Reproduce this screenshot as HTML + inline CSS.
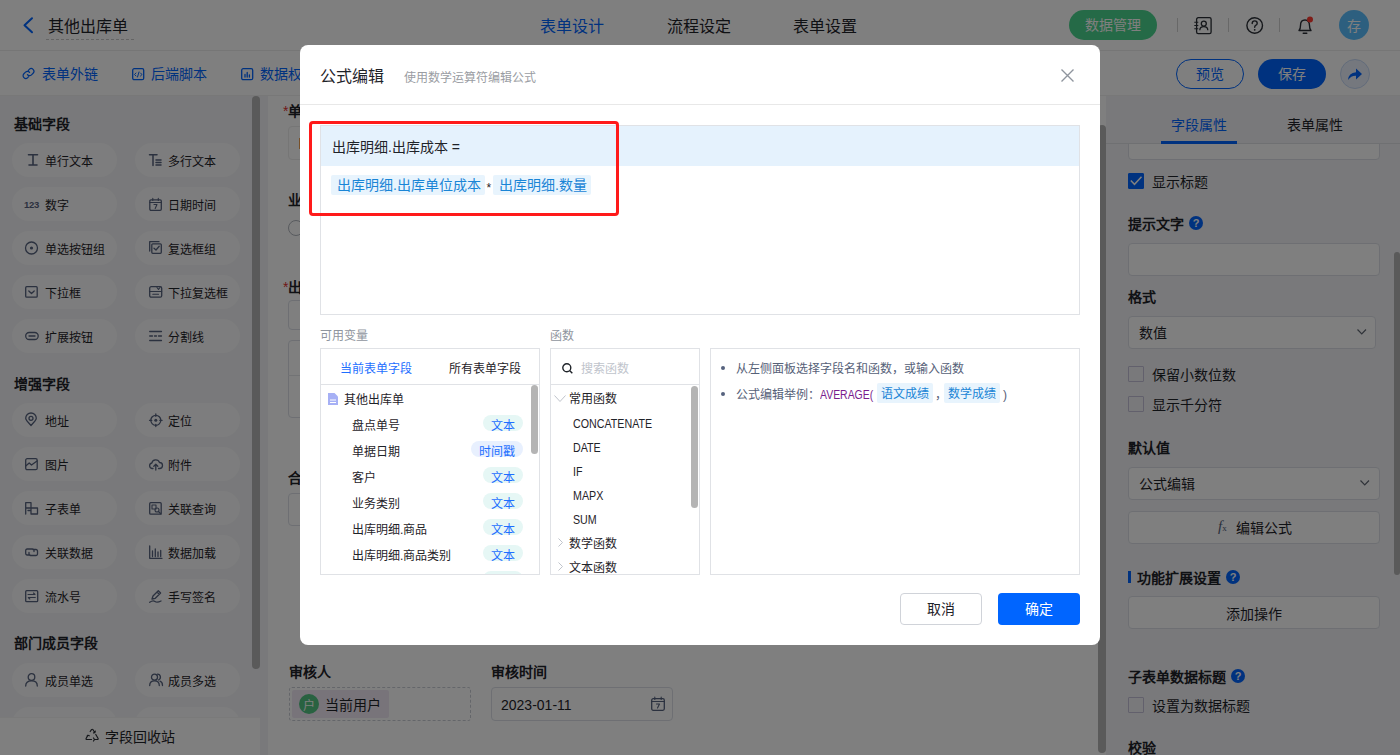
<!DOCTYPE html>
<html lang="zh-CN">
<head>
<meta charset="utf-8">
<style>
*{box-sizing:border-box;margin:0;padding:0}
html,body{width:1400px;height:755px;overflow:hidden}
body{position:relative;font-family:"Liberation Sans",sans-serif;background:#fff;color:#1f2329}
.a{position:absolute}
.t{position:absolute;white-space:nowrap;line-height:20px}
.f12{font-size:12px;margin-top:2px}
.f14{font-size:14px;margin-top:1px}
.f16{font-size:16px;margin-top:2px}
.b{font-weight:bold}
svg{position:absolute;overflow:visible}
.pill{position:absolute;width:105px;height:34px;border-radius:17px;background:#fbfbfc}
.pill .t{left:33px;top:9px;font-size:12px;color:#1f2329}
.pill svg{left:15px;top:11px}
.ico{fill:none;stroke:#56627e;stroke-width:1.3;stroke-linecap:round;stroke-linejoin:round}
.inp{position:absolute;border:1px solid #dcdfe6;border-radius:4px;background:#fff}
.cb{position:absolute;width:16px;height:16px;border:1px solid #c4c0d8;border-radius:1px}
.q{position:absolute;width:14px;height:14px;border-radius:7px;background:#0064ff;color:#fff;font-size:11px;font-weight:bold;line-height:14px;text-align:center}
</style>
</head>
<body>
<!-- ===== HEADER ===== -->
<div class="a" style="left:0;top:0;width:1400px;height:96px;background:#fff"></div>
<div class="a" style="left:0;top:50px;width:1400px;height:1px;background:#ececec"></div>
<svg style="left:22px;top:17px" width="12" height="17"><path d="M10 1.2 L2.5 8.2 L10 15.2" fill="none" stroke="#0064ff" stroke-width="2" stroke-linecap="round" stroke-linejoin="round"/></svg>
<div class="t f16" style="left:48px;top:15px">其他出库单</div>
<div class="a" style="left:46px;top:39px;width:88px;height:0;border-top:1px dashed #c8c8c8"></div>
<div class="t f16" style="left:540px;top:15px;color:#0064ff">表单设计</div>
<div class="t f16" style="left:667px;top:15px">流程设定</div>
<div class="t f16" style="left:793px;top:15px">表单设置</div>

<div class="a" style="left:1069px;top:10px;width:88px;height:30px;border-radius:15px;background:#4ad48e"></div>
<div class="t f14" style="left:1085px;top:14px;color:#fff">数据管理</div>
<div class="a" style="left:1177px;top:18px;width:1px;height:14px;background:#d0d0d0"></div>
<div class="a" style="left:1228px;top:18px;width:1px;height:14px;background:#d0d0d0"></div>
<div class="a" style="left:1279px;top:18px;width:1px;height:14px;background:#d0d0d0"></div>
<!-- contacts icon -->
<svg style="left:1194px;top:17px" width="18" height="17"><rect x="2.6" y="0.7" width="14.5" height="16" rx="1.6" fill="none" stroke="#2b2f36" stroke-width="1.3"/><circle cx="9.8" cy="6.6" r="2.5" fill="none" stroke="#2b2f36" stroke-width="1.3"/><path d="M5.8 13.2 Q5.8 9.6 9.8 9.6 Q13.8 9.6 13.8 13.2" fill="none" stroke="#2b2f36" stroke-width="1.3"/><path d="M0.3 5.2H4.3M0.3 8.5H4.3M0.3 11.8H4.3" stroke="#2b2f36" stroke-width="1.1"/></svg>
<!-- help -->
<svg style="left:1246px;top:17px" width="18" height="18"><circle cx="8.7" cy="8.5" r="7.8" fill="none" stroke="#2b2f36" stroke-width="1.4"/><path d="M6.2 6.6 Q6.2 3.9 8.7 3.9 Q11.2 3.9 11.2 6.2 Q11.2 7.7 9.6 8.4 Q8.7 8.9 8.7 10.3" fill="none" stroke="#2b2f36" stroke-width="1.4" stroke-linecap="round"/><circle cx="8.7" cy="12.8" r="0.9" fill="#2b2f36"/></svg>
<!-- bell -->
<svg style="left:1297px;top:17px" width="17" height="18"><path d="M2 13.5 Q3.5 12 3.5 8.5 Q3.5 3 8 3 Q12.5 3 12.5 8.5 Q12.5 12 14 13.5 Z" fill="none" stroke="#2b2f36" stroke-width="1.4" stroke-linejoin="round"/><path d="M6.2 16.3H9.8" stroke="#2b2f36" stroke-width="1.4" stroke-linecap="round"/><circle cx="13" cy="2.5" r="3" fill="#ff3b30"/></svg>
<div class="a" style="left:1339px;top:10px;width:30px;height:30px;border-radius:15px;background:#5abfff"></div>
<div class="t f14" style="left:1347px;top:15px;color:#fff">存</div>

<!-- toolbar -->
<div class="a" style="left:0;top:95px;width:1400px;height:1px;background:#f0f0f0"></div>
<svg style="left:22px;top:67px" width="13" height="13" viewBox="0 0 24 24"><path d="M10 14a5 5 0 0 0 7.5.5l3-3a5 5 0 0 0-7.1-7.1l-1.7 1.7M14 10a5 5 0 0 0-7.5-.5l-3 3a5 5 0 0 0 7.1 7.1l1.7-1.7" fill="none" stroke="#0064ff" stroke-width="2.2" stroke-linecap="round"/></svg>
<div class="t f14" style="left:42px;top:63px;color:#0064ff">表单外链</div>
<svg style="left:132px;top:68px" width="13" height="13"><rect x="0.7" y="0.7" width="11" height="11" rx="1.5" class="ico" style="stroke:#0064ff"/><path d="M4 5 L2.5 6.5 L4 8 M8.5 5 L10 6.5 L8.5 8 M7 4 L5.5 9" class="ico" style="stroke:#0064ff;stroke-width:1"/></svg>
<div class="t f14" style="left:151px;top:63px;color:#0064ff">后端脚本</div>
<svg style="left:241px;top:68px" width="13" height="13"><rect x="0.7" y="0.7" width="11" height="11" rx="1.5" class="ico" style="stroke:#0064ff"/><path d="M4 9V6.5M6.2 9V4.5M8.4 9V7" class="ico" style="stroke:#0064ff"/></svg>
<div class="t f14" style="left:260px;top:63px;color:#0064ff">数据权限</div>

<div class="a" style="left:1176px;top:59px;width:68px;height:30px;border-radius:15px;border:1px solid #0064ff;background:#fff"></div>
<div class="t f14" style="left:1196px;top:63px;color:#0064ff">预览</div>
<div class="a" style="left:1258px;top:59px;width:68px;height:30px;border-radius:15px;background:#0064ff"></div>
<div class="t f14" style="left:1278px;top:63px;color:#fff">保存</div>
<div class="a" style="left:1340px;top:59px;width:30px;height:30px;border-radius:15px;border:1px solid #c6d8f5;background:#eaf1fd"></div>
<svg style="left:1347px;top:67px" width="16" height="14"><path d="M1 13 Q1.5 6 9 5.3 V1.5 L15 7 L9 12.5 V8.7 Q4 8.5 1 13 Z" fill="#0064ff"/></svg>

<!-- ===== SIDEBAR ===== -->
<div class="a" style="left:0;top:96px;width:268px;height:659px;background:#f2f3f6"></div>
<div class="a" style="left:252px;top:96px;width:8px;height:573px;border-radius:4px;background:#b4b4b4"></div>
<div class="t f14 b" style="left:14px;top:113px">基础字段</div>
<div class="pill" style="left:12px;top:143px"><svg style="left:16px;top:11px" width="14" height="14"><path d="M0.5 0.8H9.5M1 11H9M5 0.8V11" class="ico" style="stroke-width:1.6"/></svg><div class="t">单行文本</div></div>
<div class="pill" style="left:135px;top:143px"><svg style="left:14px;top:11px" width="14" height="14"><path d="M0.5 0.7H8M4 0.7V11.5M7 6H12M7 8.5H12M7 11H12" class="ico" style="stroke-width:1.5"/></svg><div class="t">多行文本</div></div>
<div class="pill" style="left:12px;top:187px"><svg style="left:12px;top:11px" width="14" height="14"><text x="0" y="9.5" font-size="9.5" font-weight="bold" fill="#56627e" font-family="Liberation Sans" style="letter-spacing:-0.3px">123</text></svg><div class="t">数字</div></div>
<div class="pill" style="left:135px;top:187px"><svg style="left:14px;top:11px" width="14" height="14"><rect x="0.8" y="1.8" width="11.5" height="10.5" rx="1.2" class="ico"/><path d="M0.8 4.5H12.3M3.8 0.3V2.5M9.3 0.3V2.5M5 6.5H8L6.2 10.5" class="ico" style="stroke-width:1.1"/></svg><div class="t">日期时间</div></div>
<div class="pill" style="left:12px;top:231px"><svg style="left:13px;top:11px" width="14" height="14"><circle cx="6.5" cy="6" r="6" class="ico"/><circle cx="6.5" cy="6" r="1.6" fill="#56627e"/></svg><div class="t">单选按钮组</div></div>
<div class="pill" style="left:135px;top:231px"><svg style="left:14px;top:10px" width="14" height="14"><path d="M0.7 10V0.7H10" class="ico"/><rect x="2.8" y="2.8" width="9.5" height="9.5" rx="1" class="ico"/><path d="M5 7.2L7 9L10.2 5.3" class="ico"/></svg><div class="t">复选框组</div></div>
<div class="pill" style="left:12px;top:275px"><svg style="left:13px;top:11px" width="14" height="14"><rect x="0.7" y="0.7" width="11.5" height="10.5" rx="1" class="ico"/><path d="M3.8 5L6.5 7.5L9.2 5" class="ico"/></svg><div class="t">下拉框</div></div>
<div class="pill" style="left:135px;top:275px"><svg style="left:14px;top:11px" width="14" height="14"><rect x="0.7" y="0.7" width="12" height="10.5" rx="1.5" class="ico"/><path d="M0.7 5.5H12.7M3.8 8.2H9.5M8 1.5L9.5 3.5L11 1.5" class="ico" style="stroke-width:1.1"/></svg><div class="t">下拉复选框</div></div>
<div class="pill" style="left:12px;top:319px"><svg style="left:13px;top:11px" width="14" height="14"><rect x="0.7" y="2.5" width="12.5" height="7" rx="3.5" class="ico"/><path d="M4 6H10" class="ico"/></svg><div class="t">扩展按钮</div></div>
<div class="pill" style="left:135px;top:319px"><svg style="left:14px;top:11px" width="14" height="14"><path d="M0.7 1.5H12.5M0.7 6H3.5M5.5 6H7.5M9.5 6H12.5M0.7 10.5H12.5" class="ico"/></svg><div class="t">分割线</div></div>
<div class="pill" style="left:12px;top:403px"><svg style="left:13px;top:10px" width="14" height="14"><path d="M6 12.5Q0.7 7 0.7 5.3A5.3 5.3 0 0 1 11.3 5.3Q11.3 7 6 12.5Z" class="ico"/><circle cx="6" cy="5.3" r="2" class="ico"/></svg><div class="t">地址</div></div>
<div class="pill" style="left:135px;top:403px"><svg style="left:14px;top:11px" width="14" height="14"><circle cx="6.8" cy="6.3" r="5" class="ico"/><circle cx="6.8" cy="6.3" r="1.5" fill="#56627e"/><path d="M6.8 0V2.3M6.8 10.3V12.6M0.5 6.3H2.8M10.8 6.3H13.1" class="ico"/></svg><div class="t">定位</div></div>
<div class="pill" style="left:12px;top:447px"><svg style="left:13px;top:11px" width="14" height="14"><rect x="0.7" y="0.7" width="11.5" height="11" rx="1.5" class="ico"/><path d="M0.7 8L4.2 5L6.5 7L12 3" class="ico"/></svg><div class="t">图片</div></div>
<div class="pill" style="left:135px;top:447px"><svg style="left:14px;top:11px" width="14" height="14"><path d="M4 10.5H3A2.8 2.8 0 0 1 2.8 5A4 4 0 0 1 10.5 4.5A2.9 2.9 0 0 1 10.5 10.5H9.5M6.8 12V6.5M4.8 8.3L6.8 6.3L8.8 8.3" class="ico"/></svg><div class="t">附件</div></div>
<div class="pill" style="left:12px;top:491px"><svg style="left:13px;top:11px" width="14" height="14"><path d="M0.7 12V0.7H6V12H12.5V6H0.7M6 8.5H3" class="ico"/></svg><div class="t">子表单</div></div>
<div class="pill" style="left:135px;top:491px"><svg style="left:14px;top:11px" width="14" height="14"><rect x="0.7" y="0.7" width="11.5" height="11.5" rx="1" class="ico"/><rect x="3" y="3" width="4" height="4" class="ico" style="stroke-width:1.1"/><circle cx="8" cy="8" r="2" class="ico" style="stroke-width:1.1"/><path d="M9.5 9.5L12 12" class="ico"/></svg><div class="t">关联查询</div></div>
<div class="pill" style="left:12px;top:535px"><svg style="left:13px;top:11px" width="14" height="14"><path d="M5 9H2A1.5 1.5 0 0 1 0.7 7.5V4.5A1.5 1.5 0 0 1 2 3H7.5A1.5 1.5 0 0 1 9 4.5V5.5M8 3.5H11A1.5 1.5 0 0 1 12.5 5V8A1.5 1.5 0 0 1 11 9.5H5.5A1.5 1.5 0 0 1 4 8V6.5" class="ico"/></svg><div class="t">关联数据</div></div>
<div class="pill" style="left:135px;top:535px"><svg style="left:14px;top:11px" width="14" height="14"><path d="M0.7 0V12.3H13M3.5 10.5V5M6.3 10.5V3M9 10.5V6M11.7 10.5V4.5" class="ico"/></svg><div class="t">数据加载</div></div>
<div class="pill" style="left:12px;top:579px"><svg style="left:13px;top:11px" width="14" height="14"><rect x="0.7" y="0.7" width="12" height="11" rx="1" class="ico"/><path d="M3 4.5H10L8.5 3M10.3 7.5H3.3L4.8 9" class="ico" style="stroke-width:1.1"/></svg><div class="t">流水号</div></div>
<div class="pill" style="left:135px;top:579px"><svg style="left:14px;top:11px" width="14" height="14"><path d="M3 9L4 6L9.3 0.7L11.6 3L6.3 8.3L3 9ZM8 2L10.3 4.3M0.7 12.3Q4 10 6 11.5Q8 13 12 11" class="ico"/></svg><div class="t">手写签名</div></div>
<div class="pill" style="left:12px;top:663px"><svg style="left:13px;top:10px" width="14" height="14"><circle cx="6.5" cy="4" r="3.3" class="ico"/><path d="M0.7 13Q0.7 7.8 6.5 7.8Q12.3 7.8 12.3 13" class="ico"/></svg><div class="t">成员单选</div></div>
<div class="pill" style="left:135px;top:663px"><svg style="left:14px;top:10px" width="14" height="14"><circle cx="5.5" cy="4.2" r="3" class="ico"/><path d="M0.7 12.5Q0.7 7.8 5.5 7.8Q10.3 7.8 10.3 12.5M8.5 1.2A3 3 0 0 1 9.5 7M11 8.2Q13.5 9 13.5 12.5" class="ico"/></svg><div class="t">成员多选</div></div>
<div class="pill" style="left:12px;top:707px"><svg style="left:13px;top:11px" width="14" height="14"></svg><div class="t">部门单选</div></div>
<div class="pill" style="left:135px;top:707px"><svg style="left:14px;top:11px" width="14" height="14"></svg><div class="t">部门多选</div></div>

<div class="t f14 b" style="left:14px;top:373px">增强字段</div>
<div class="t f14 b" style="left:14px;top:632px">部门成员字段</div>
<div class="a" style="left:0;top:717px;width:260px;height:38px;background:#fff;border-top:1px solid #f4f4f4"></div>
<svg style="left:85px;top:729px" width="15" height="14"><path d="M5.2 2.5L6.5 0.7Q7.3 -0.2 8 0.7L9.8 3.5M10.8 5.5L13 9.3Q13.5 10.5 12.3 10.5H9.5M6.5 10.5H1.8Q0.7 10.5 1.2 9.3L3 6.3M8.5 3.8L9.9 3.6L10.3 2.2M8.5 9L9.5 10.5L8.5 12M4.3 6.8L3 6.2L2 7.2" class="ico" style="stroke:#2b2f36;stroke-width:1.2"/></svg>
<div class="t f14" style="left:105px;top:726px">字段回收站</div>

<!-- ===== CANVAS ===== -->
<div class="a" style="left:268px;top:96px;width:838px;height:659px;background:#fff"></div>
<div class="a" style="left:1098px;top:125px;width:8px;height:628px;border-radius:4px;background:#b4b4b4"></div>
<div class="t f14 b" style="left:283px;top:100px"><span style="color:#e03030;font-weight:normal">*</span>单据编号</div>
<div class="inp" style="left:288px;top:126px;width:300px;height:34px;border-color:#ececec"></div><div class="a" style="left:299px;top:138px;width:1px;height:11px;background:#f0a050"></div>
<div class="t f14 b" style="left:288px;top:189px">业务类别</div>
<div class="a" style="left:288px;top:220px;width:16px;height:16px;border-radius:8px;border:1px solid #b0b5bd;background:#fff"></div>
<div class="t f14 b" style="left:283px;top:276px"><span style="color:#e03030;font-weight:normal">*</span>出库明细</div>
<div class="inp" style="left:288px;top:300px;width:300px;height:30px"></div>
<div class="inp" style="left:288px;top:340px;width:300px;height:78px"></div>
<div class="a" style="left:288px;top:375px;width:300px;height:1px;background:#e5e6eb"></div>
<div class="t f14 b" style="left:288px;top:467px">合计</div>
<div class="inp" style="left:288px;top:493px;width:300px;height:33px"></div>

<div class="t f14 b" style="left:289px;top:661px">审核人</div>
<div class="a" style="left:289px;top:687px;width:182px;height:34px;border:1px dashed #c9cdd4;border-radius:3px"></div>
<div class="a" style="left:292px;top:690px;width:97px;height:28px;border-radius:2px;background:#f0e9f5"></div>
<div class="a" style="left:299px;top:694px;width:20px;height:20px;border-radius:10px;background:#52c483"></div>
<div class="t f12" style="left:303px;top:694px;color:#fff">户</div>
<div class="t f14" style="left:325px;top:694px">当前用户</div>
<div class="t f14 b" style="left:491px;top:661px">审核时间</div>
<div class="inp" style="left:491px;top:687px;width:182px;height:34px"></div>
<div class="t f14" style="left:501px;top:694px">2023-01-11</div>
<svg style="left:651px;top:697px" width="14" height="14"><rect x="0.7" y="1.7" width="12.6" height="11.6" rx="1.5" class="ico"/><path d="M0.7 4.5H13.3M3.8 0V2.5M10.2 0V2.5M5.5 7H8.5L6.5 11" class="ico" style="stroke-width:1.1"/></svg>

<!-- ===== RIGHT PANEL ===== -->
<div class="a" style="left:1106px;top:96px;width:294px;height:659px;background:#f2f3f6"></div>
<div class="inp" style="left:1128px;top:127px;width:252px;height:33px"></div>
<div class="a" style="left:1106px;top:96px;width:294px;height:48px;background:#f2f3f6;border-bottom:1px solid #dfe1e5"></div>
<div class="t f14" style="left:1171px;top:114px;color:#0064ff">字段属性</div>
<div class="a" style="left:1161px;top:141px;width:76px;height:3px;background:#0064ff"></div>
<div class="t f14" style="left:1287px;top:114px">表单属性</div>
<div class="a" style="left:1394px;top:252px;width:6px;height:323px;border-radius:3px;background:#b4b4b4"></div>

<div class="cb" style="left:1128px;top:173px;background:#0064ff;border-color:#0064ff"></div>
<svg style="left:1130px;top:176px" width="12" height="10"><path d="M0.8 4.5L4.5 8.3L11.5 0.8" fill="none" stroke="#fff" stroke-width="1.5"/></svg>
<div class="t f14" style="left:1152px;top:171px">显示标题</div>
<div class="t f14 b" style="left:1128px;top:213px">提示文字</div>
<div class="q" style="left:1189px;top:216px">?</div>
<div class="inp" style="left:1128px;top:243px;width:252px;height:33px"></div>
<div class="t f14 b" style="left:1128px;top:286px">格式</div>
<div class="inp" style="left:1128px;top:316px;width:248px;height:33px"></div>
<div class="t f14" style="left:1139px;top:322px">数值</div>
<svg style="left:1357px;top:329px" width="10" height="6"><path d="M0.5 0.5L4.75 5L9 0.5" fill="none" stroke="#5f6672" stroke-width="1.2"/></svg>
<div class="cb" style="left:1128px;top:366px"></div>
<div class="t f14" style="left:1152px;top:364px">保留小数位数</div>
<div class="cb" style="left:1128px;top:396px"></div>
<div class="t f14" style="left:1152px;top:394px">显示千分符</div>
<div class="t f14 b" style="left:1128px;top:437px">默认值</div>
<div class="inp" style="left:1128px;top:467px;width:252px;height:33px"></div>
<div class="t f14" style="left:1139px;top:473px">公式编辑</div>
<svg style="left:1360px;top:480px" width="10" height="6"><path d="M0.5 0.5L4.75 5L9 0.5" fill="none" stroke="#5f6672" stroke-width="1.2"/></svg>
<div class="inp" style="left:1128px;top:511px;width:252px;height:33px"></div>
<div class="t" style="left:1218px;top:516px;font-family:'Liberation Serif',serif;font-style:italic;font-size:15px;color:#566178">f<span style="font-size:9px;font-style:normal">x</span></div>
<div class="t f14" style="left:1236px;top:517px">编辑公式</div>
<div class="a" style="left:1128px;top:571px;width:3px;height:12px;background:#0064ff"></div>
<div class="t f14 b" style="left:1137px;top:567px">功能扩展设置</div>
<div class="q" style="left:1226px;top:570px">?</div>
<div class="inp" style="left:1128px;top:596px;width:252px;height:33px"></div>
<div class="t f14" style="left:1226px;top:603px">添加操作</div>
<div class="t f14 b" style="left:1128px;top:666px">子表单数据标题</div>
<div class="q" style="left:1231px;top:669px">?</div>
<div class="cb" style="left:1128px;top:697px"></div>
<div class="t f14" style="left:1152px;top:695px">设置为数据标题</div>
<div class="t f14 b" style="left:1128px;top:737px">校验</div>

<!-- ===== OVERLAY ===== -->
<div class="a" style="left:0;top:0;width:1400px;height:755px;background:rgba(0,0,0,.5)"></div>

<!-- ===== MODAL ===== -->
<div class="a" style="left:300px;top:45px;width:800px;height:600px;border-radius:8px;background:#fff"></div>
<div class="t f16" style="left:320px;top:65px;color:#1f2329">公式编辑</div>
<div class="t f12" style="left:404px;top:66px;color:#9a9da3">使用数学运算符编辑公式</div>
<svg style="left:1061px;top:69px" width="13" height="13"><path d="M0.5 0.5L12.5 12.5M12.5 0.5L0.5 12.5" stroke="#8f959e" stroke-width="1.4"/></svg>
<div class="a" style="left:300px;top:104px;width:800px;height:1px;background:#e8e8e8"></div>

<div class="a" style="left:320px;top:125px;width:760px;height:190px;border:1px solid #e0e2e6"></div>
<div class="a" style="left:321px;top:126px;width:758px;height:40px;background:#e5f2fd"></div>
<div class="t f14" style="left:332px;top:136px;color:#1f2329">出库明细.出库成本 =</div>
<div class="a" style="left:331px;top:175px;width:154px;height:20px;border-radius:2px;background:#e8f4fd"></div>
<div class="t f14" style="left:337px;top:174px;color:#1a85d6">出库明细.出库单位成本</div>
<div class="t f12" style="left:486.5px;top:176px;color:#1f2329">*</div>
<div class="a" style="left:493px;top:175px;width:98px;height:20px;border-radius:2px;background:#e8f4fd"></div>
<div class="t f14" style="left:499px;top:174px;color:#1a85d6">出库明细.数量</div>
<div class="a" style="left:309px;top:121px;width:310px;height:95px;border:3px solid #ff1a1a;border-radius:4px"></div>

<div class="t f12" style="left:320px;top:324px;color:#8f959e">可用变量</div>
<div class="t f12" style="left:550px;top:324px;color:#8f959e">函数</div>

<div class="a" style="left:320px;top:348px;width:220px;height:227px;border:1px solid #e0e2e6"></div>
<div class="a" style="left:321px;top:384px;width:218px;height:1px;background:#e0e2e6"></div>
<div class="t f12" style="left:340px;top:357px;color:#1e6fff">当前表单字段</div>
<div class="t f12" style="left:449px;top:357px;color:#1f2329">所有表单字段</div>
<svg style="left:328px;top:393px" width="10" height="12"><path d="M0 0H6.5L10 3.5V12H0Z" fill="#a6b0f5"/><path d="M2 7H8M2 9.5H8" stroke="#fff" stroke-width="1"/></svg>
<div class="t f12" style="left:344px;top:388px">其他出库单</div>
<div class="a" style="left:321px;top:385px;width:218px;height:189px;overflow:hidden">
<div class="t f12" style="left:31px;top:29px">盘点单号</div>
<div class="a" style="left:162px;top:30px;width:40px;height:16px;border-radius:8px;background:#e6f7f5"></div>
<div class="t f12" style="left:170px;top:29px;color:#1e6fff">文本</div>
<div class="t f12" style="left:31px;top:55px">单据日期</div>
<div class="a" style="left:150px;top:56px;width:52px;height:16px;border-radius:8px;background:#e8f0fe"></div>
<div class="t f12" style="left:158px;top:55px;color:#1e6fff">时间戳</div>
<div class="t f12" style="left:31px;top:81px">客户</div>
<div class="a" style="left:162px;top:82px;width:40px;height:16px;border-radius:8px;background:#e6f7f5"></div>
<div class="t f12" style="left:170px;top:81px;color:#1e6fff">文本</div>
<div class="t f12" style="left:31px;top:107px">业务类别</div>
<div class="a" style="left:162px;top:108px;width:40px;height:16px;border-radius:8px;background:#e6f7f5"></div>
<div class="t f12" style="left:170px;top:107px;color:#1e6fff">文本</div>
<div class="t f12" style="left:31px;top:133px">出库明细.商品</div>
<div class="a" style="left:162px;top:134px;width:40px;height:16px;border-radius:8px;background:#e6f7f5"></div>
<div class="t f12" style="left:170px;top:133px;color:#1e6fff">文本</div>
<div class="t f12" style="left:31px;top:159px">出库明细.商品类别</div>
<div class="a" style="left:162px;top:160px;width:40px;height:16px;border-radius:8px;background:#e6f7f5"></div>
<div class="t f12" style="left:170px;top:159px;color:#1e6fff">文本</div>
<div class="t f12" style="left:31px;top:185px">出库明细.数量</div>
<div class="a" style="left:162px;top:186px;width:40px;height:16px;border-radius:8px;background:#e6f7f5"></div>
<div class="t f12" style="left:170px;top:185px;color:#1e6fff">数字</div>
</div>
<div class="a" style="left:531px;top:385px;width:7px;height:69px;border-radius:3.5px;background:#b4b4b4"></div>

<div class="a" style="left:550px;top:348px;width:150px;height:227px;border:1px solid #e0e2e6"></div>
<div class="a" style="left:551px;top:384px;width:148px;height:1px;background:#e0e2e6"></div>
<svg style="left:562px;top:363px" width="11" height="11"><circle cx="4.8" cy="4.8" r="4" fill="none" stroke="#1f2329" stroke-width="1.4"/><path d="M7.8 7.8L10.3 10.3" stroke="#1f2329" stroke-width="1.4"/></svg>
<div class="t f12" style="left:581px;top:357px;color:#c0c4cc">搜索函数</div>
<svg style="left:554px;top:395px" width="12" height="8"><path d="M0.5 0.5L6 6.5L11.5 0.5" fill="none" stroke="#c0c4cc" stroke-width="1"/></svg>
<div class="t f12" style="left:569px;top:387px">常用函数</div>
<div class="t f12" style="left:573px;top:412px;transform:scaleX(0.89);transform-origin:0 0">CONCATENATE</div>
<div class="t f12" style="left:573px;top:436px;transform:scaleX(0.89);transform-origin:0 0">DATE</div>
<div class="t f12" style="left:573px;top:460px;transform:scaleX(0.89);transform-origin:0 0">IF</div>
<div class="t f12" style="left:573px;top:484px;transform:scaleX(0.89);transform-origin:0 0">MAPX</div>
<div class="t f12" style="left:573px;top:508px;transform:scaleX(0.89);transform-origin:0 0">SUM</div>
<svg style="left:558px;top:538px" width="5" height="9"><path d="M0.5 0.5L4.5 4.5L0.5 8.5" fill="none" stroke="#c0c4cc" stroke-width="1"/></svg>
<div class="t f12" style="left:569px;top:532px">数学函数</div>
<svg style="left:558px;top:562px" width="5" height="9"><path d="M0.5 0.5L4.5 4.5L0.5 8.5" fill="none" stroke="#c0c4cc" stroke-width="1"/></svg>
<div class="t f12" style="left:569px;top:556px">文本函数</div>
<div class="a" style="left:551px;top:574px;width:148px;height:1px;background:#e0e2e6"></div>
<div class="a" style="left:691px;top:386px;width:7px;height:122px;border-radius:3.5px;background:#b4b4b4"></div>

<div class="a" style="left:710px;top:348px;width:370px;height:227px;border:1px solid #e0e2e6"></div>
<div class="a" style="left:721px;top:366px;width:4px;height:4px;border-radius:2px;background:#56627e"></div>
<div class="t f12" style="left:736px;top:357px;color:#566178">从左侧面板选择字段名和函数，或输入函数</div>
<div class="a" style="left:721px;top:392px;width:4px;height:4px;border-radius:2px;background:#56627e"></div>
<div class="t f12" style="left:736px;top:383px;color:#566178">公式编辑举例：<span style="color:#7a1c8e;display:inline-block;transform:scaleX(0.87);transform-origin:0 0">AVERAGE(</span></div>
<div class="a" style="left:877px;top:383px;width:56px;height:20px;border-radius:2px;background:#e8f4fd"></div>
<div class="t f12" style="left:881px;top:382px;color:#1a85d6">语文成绩</div>
<div class="t f12" style="left:935px;top:383px;color:#566178">，</div>
<div class="a" style="left:944px;top:383px;width:56px;height:20px;border-radius:2px;background:#e8f4fd"></div>
<div class="t f12" style="left:948px;top:382px;color:#1a85d6">数学成绩</div>
<div class="t f12" style="left:1003px;top:383px;color:#566178">)</div>

<div class="a" style="left:900px;top:593px;width:82px;height:32px;border:1px solid #d0d3d9;border-radius:4px;background:#fff"></div>
<div class="t f14" style="left:927px;top:598px">取消</div>
<div class="a" style="left:998px;top:593px;width:82px;height:32px;border-radius:4px;background:#0065ff"></div>
<div class="t f14" style="left:1025px;top:598px;color:#fff">确定</div>

</body>
</html>
